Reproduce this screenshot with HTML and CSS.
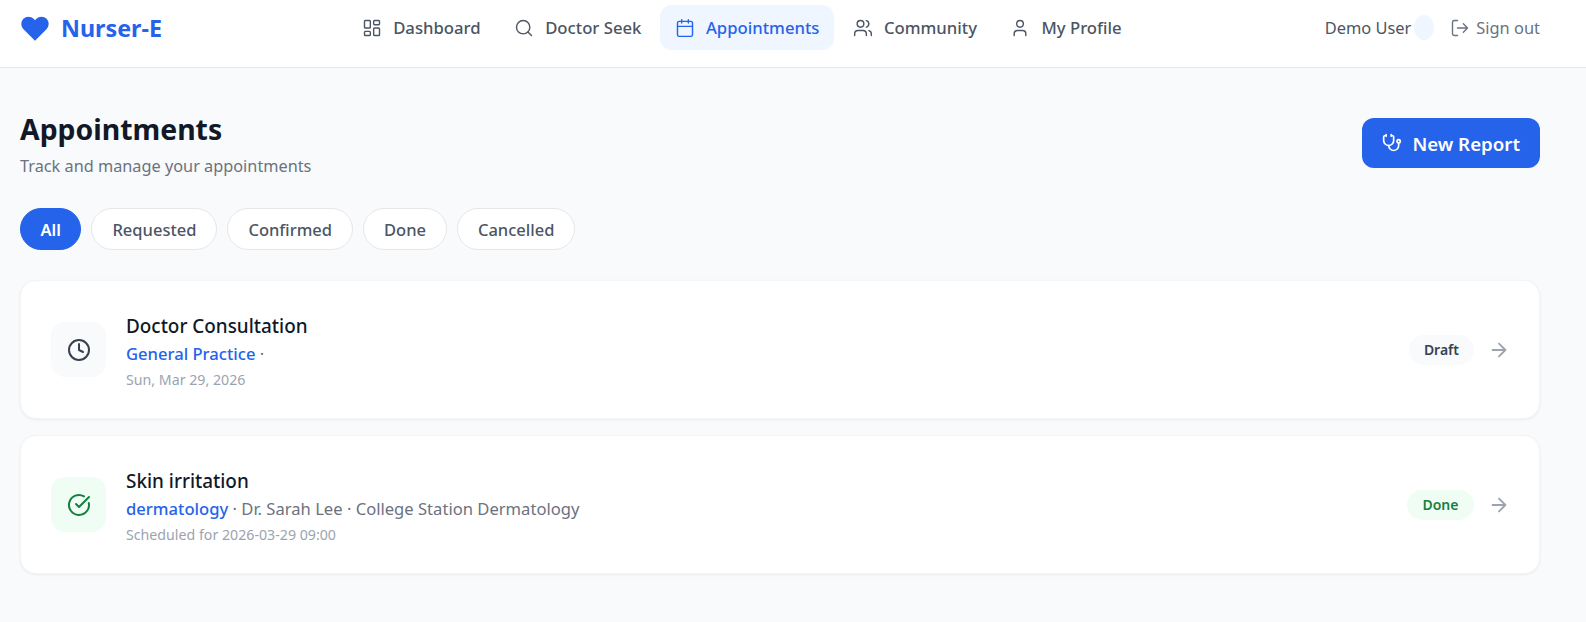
FILE: index.html
```html
<!DOCTYPE html>
<html lang="en">
<head>
<meta charset="utf-8">
<title>Nurser-E</title>
<link rel="stylesheet" href="styles.css">
</head>
<body>
<header class="topbar">
  <div class="brand">
    <svg class="brand-icon" viewBox="0 0 24 24" fill="currentColor"><path d="M12 21.5 3.4 12.9C1.2 10.7 1.2 7.2 3.3 5.1 5.4 3 8.9 3 11 5.1l1 1 1-1c2.1-2.1 5.6-2.1 7.7 0 2.1 2.1 2.1 5.6-.1 7.8z"/></svg>
    <span>Nurser-E</span>
  </div>
  <nav class="nav">
    <a class="nav-item"><svg class="icon" viewBox="0 0 24 24"><rect x="3" y="3" width="7" height="9" rx="1"/><rect x="14" y="3" width="7" height="5" rx="1"/><rect x="14" y="12" width="7" height="9" rx="1"/><rect x="3" y="16" width="7" height="5" rx="1"/></svg>Dashboard</a>
    <a class="nav-item"><svg class="icon" viewBox="0 0 24 24"><circle cx="11" cy="11" r="8"/><path d="m21 21-4.3-4.3"/></svg>Doctor Seek</a>
    <a class="nav-item is-active"><svg class="icon" viewBox="0 0 24 24"><path d="M8 2v4M16 2v4"/><rect x="3" y="4" width="18" height="18" rx="2"/><path d="M3 10h18"/></svg>Appointments</a>
    <a class="nav-item"><svg class="icon" viewBox="0 0 24 24"><path d="M16 21v-2a4 4 0 0 0-4-4H6a4 4 0 0 0-4 4v2"/><circle cx="9" cy="7" r="4"/><path d="M22 21v-2a4 4 0 0 0-3-3.87M16 3.13a4 4 0 0 1 0 7.75"/></svg>Community</a>
    <a class="nav-item"><svg class="icon" viewBox="0 0 24 24"><path d="M19 21v-2a4 4 0 0 0-4-4H9a4 4 0 0 0-4 4v2"/><circle cx="12" cy="7" r="4"/></svg>My Profile</a>
  </nav>
  <div class="account">
    <span class="user-name">Demo User</span>
    <span class="avatar"></span>
    <a class="signout"><svg class="icon" viewBox="0 0 24 24"><path d="M9 21H5a2 2 0 0 1-2-2V5a2 2 0 0 1 2-2h4"/><path d="m16 17 5-5-5-5M21 12H9"/></svg>Sign out</a>
  </div>
</header>
<main class="page">
  <div class="page-head">
    <div>
      <h1 class="page-title">Appointments</h1>
      <p class="page-sub">Track and manage your appointments</p>
    </div>
    <button class="primary-btn"><svg class="icon" viewBox="0 0 24 24"><path d="M11 2v2M5 2v2M5 3H4a2 2 0 0 0-2 2v4a6 6 0 0 0 12 0V5a2 2 0 0 0-2-2h-1"/><path d="M8 15a6 6 0 0 0 12 0v-3"/><circle cx="20" cy="10" r="2"/></svg>New Report</button>
  </div>
  <div class="filters">
    <button class="chip is-on">All</button>
    <button class="chip">Requested</button>
    <button class="chip">Confirmed</button>
    <button class="chip">Done</button>
    <button class="chip">Cancelled</button>
  </div>
  <div class="list">
    <article class="card">
      <div class="tile tile-grey"><svg class="icon" viewBox="0 0 24 24"><circle cx="12" cy="12" r="10"/><path d="M12 6v6l4 2"/></svg></div>
      <div class="card-body">
        <div class="card-title">Doctor Consultation</div>
        <div class="card-meta"><span class="spec">General Practice</span> ·</div>
        <div class="card-date">Sun, Mar 29, 2026</div>
      </div>
      <span class="badge badge-draft">Draft</span>
      <svg class="icon arrow" viewBox="0 0 24 24"><path d="M5 12h14M12 5l7 7-7 7"/></svg>
    </article>
    <article class="card">
      <div class="tile tile-green"><svg class="icon" viewBox="0 0 24 24"><path d="M21.8 10A10 10 0 1 1 17 3.3"/><path d="m9 11 3 3L22 4"/></svg></div>
      <div class="card-body">
        <div class="card-title">Skin irritation</div>
        <div class="card-meta"><span class="spec">dermatology</span> · Dr. Sarah Lee · College Station Dermatology</div>
        <div class="card-date">Scheduled for 2026-03-29 09:00</div>
      </div>
      <span class="badge badge-done">Done</span>
      <svg class="icon arrow" viewBox="0 0 24 24"><path d="M5 12h14M12 5l7 7-7 7"/></svg>
    </article>
  </div>
</main>
</body>
</html>
```
FILE: styles.css
```css
* { box-sizing: border-box; }
html, body { margin: 0; height: 100%; }
body {
  background: #f9fafb;
  color: #111827;
  font-family: "Noto Sans", "Open Sans", sans-serif;
  overflow: hidden;
}
.icon {
  width: 20px;
  height: 20px;
  flex: none;
  fill: none;
  stroke: currentColor;
  stroke-width: 2;
  stroke-linecap: round;
  stroke-linejoin: round;
}
.topbar {
  display: flex;
  justify-content: space-between;
  align-items: center;
  height: 68px;
  padding: 5px 46px 17px 20px;
  background: #fff;
  border-bottom: 1px solid #e5e7eb;
}
.brand {
  display: flex;
  align-items: center;
  gap: 10px;
  color: #2563eb;
  font-size: 23.3px;
  font-weight: 700;
}
.brand-icon { width: 32px; height: 32px; margin-left: -1px; }
.nav { display: flex; gap: 3.5px; align-items: center; margin-right: 3px; }
.nav-item {
  display: flex;
  align-items: center;
  gap: 11px;
  height: 45px;
  padding: 0 15px;
  border-radius: 12px;
  color: #4b5563;
  font-size: 16.7px;
  font-weight: 500;
}
.nav-item .icon { stroke-width: 1.7; }
.nav-item.is-active { background: #eff6ff; color: #2563eb; }
.account {
  display: flex;
  align-items: center;
  justify-content: flex-end;
  color: #4b5563;
  font-size: 16.4px;
}
.avatar {
  width: 20px;
  height: 25px;
  margin: 0 16px 0 3px;
  border-radius: 50%;
  background: #eff6ff;
}
.signout { display: flex; align-items: center; gap: 6px; color: #6b7280; }
.signout .icon { stroke-width: 1.7; }
.page { padding: 43px 46px 0 20px; }
.page-head {
  display: flex;
  align-items: flex-start;
  justify-content: space-between;
}
.page-title {
  margin: 0;
  font-size: 28.4px;
  line-height: 36px;
  font-weight: 700;
}
.page-sub {
  margin: 7px 0 0;
  color: #6b7280;
  font-size: 16.3px;
  line-height: 24px;
}
.primary-btn {
  display: flex;
  align-items: center;
  gap: 10px;
  height: 50px;
  margin-top: 7px;
  padding: 0 20px;
  border: 0;
  border-radius: 12px;
  background: #2563eb;
  color: #fff;
  font: 600 18.7px "Noto Sans", sans-serif;
}
.filters { display: flex; gap: 10px; margin-top: 30px; }
.chip {
  height: 42px;
  padding: 0 20px;
  border: 1px solid #e5e7eb;
  border-radius: 21px;
  background: #fff;
  color: #4b5563;
  font: 500 16.5px "Noto Sans", sans-serif;
}
.chip.is-on {
  padding: 0 19.5px;
  background: #2563eb;
  border-color: #2563eb;
  color: #fff;
  font-weight: 600;
}
.list { display: flex; flex-direction: column; gap: 16px; margin-top: 30px; }
.card {
  display: flex;
  align-items: center;
  height: 139px;
  padding: 0 29px 0 30px;
  border: 1px solid #f3f4f6;
  border-radius: 16px;
  background: #fff;
  box-shadow: 0 1px 3px rgba(0, 0, 0, .06);
}
.tile {
  display: flex;
  align-items: center;
  justify-content: center;
  width: 55px;
  height: 55px;
  border-radius: 14px;
}
.tile .icon { width: 24px; height: 24px; }
.tile-grey { background: #f9fafb; color: #374151; }
.tile-green { background: #f0fdf4; color: #15803d; }
.card-body { flex: 1; margin-left: 20px; padding-top: 3px; }
.card-title { font-size: 18.9px; line-height: 26px; font-weight: 500; color: #111827; }
.card-meta { font-size: 16.6px; line-height: 26px; color: #6b7280; margin-top: 2px; }
.spec { color: #2563eb; font-weight: 500; }
.card-date { font-size: 14.2px; line-height: 20px; color: #9ca3af; margin-top: 3px; }
.badge {
  display: flex;
  align-items: center;
  height: 30px;
  padding: 0 15px;
  border-radius: 15px;
  font-size: 14px;
  font-weight: 600;
}
.badge-draft { background: #f9fafb; color: #374151; }
.badge-done { padding: 0 15.5px; background: #f0fdf4; color: #15803d; }
.arrow { width: 22px; height: 22px; margin-left: 14px; color: #9ca3af; }
```
